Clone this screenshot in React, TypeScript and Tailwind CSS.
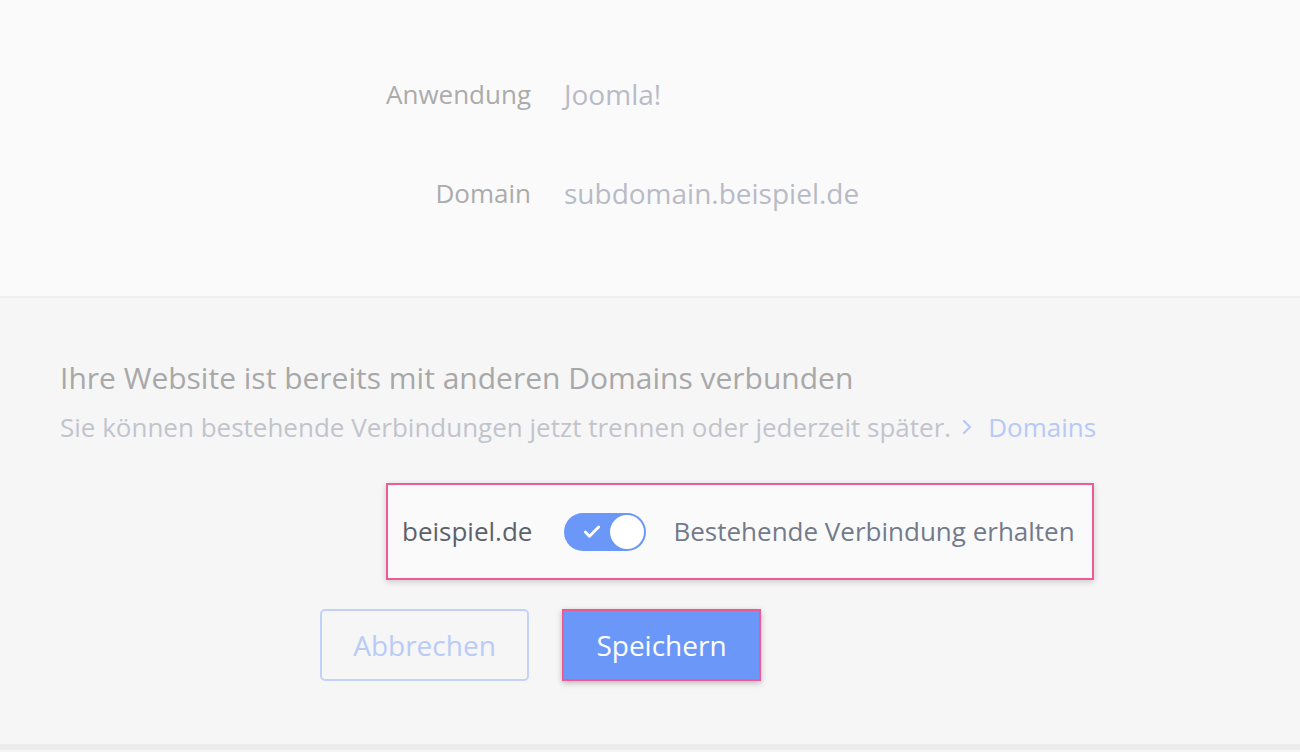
import { Check, ChevronRight } from 'lucide-react';

const INFO = [
  { label: 'Anwendung', value: 'Joomla!' },
  { label: 'Domain', value: 'subdomain.beispiel.de' },
];

export default function App() {
  return (
    <div className="min-h-screen w-full bg-[#f6f6f6] font-['Open_Sans',sans-serif]">
      {/* Summary */}
      <div className="bg-[#fafafa] border-b-2 border-[#efefef] pt-[74px] pb-[82px] flex flex-col gap-[58px]">
        {INFO.map(row => (
          <div key={row.label} className="flex items-center leading-[41px]">
            <span className="w-[531px] text-right text-[26px] text-[#ababab]">{row.label}</span>
            <span className="ml-[33px] text-[28px] text-[#b8bbc6]">{row.value}</span>
          </div>
        ))}
      </div>

      {/* Existing connections */}
      <div className="pt-[58px] pb-[63px] border-b-[6px] border-[#ececec]">
        <div className="px-[60px]">
          <h2 className="text-[30px] leading-[44px] text-[#a8a8a8]">
            Ihre Website ist bereits mit anderen Domains verbunden
          </h2>
          <p className="mt-[9px] flex items-center text-[26px] leading-[36px] text-[#c2c4cc]">
            Sie können bestehende Verbindungen jetzt trennen oder jederzeit später.
            <ChevronRight className="ml-[4px] w-[24px] h-[24px] text-[#b7c9f6]" strokeWidth={2.2} />
            <span className="ml-[9px] text-[#b7c9f6]">Domains</span>
          </p>
        </div>

        <div className="mt-[38px] ml-[386px] w-[708px] h-[97px] flex items-center border-2 border-[#ec5b95] bg-[#fafafa] shadow-[0_2px_6px_rgba(0,0,0,0.18)] px-[14px]">
          <span className="text-[26px] text-[#5d616b]">beispiel.de</span>
          <div className="ml-[32px] w-[82px] h-[38px] rounded-full bg-[#6b97f8] flex items-center justify-between pl-[18px] pr-[2px]">
            <Check className="w-[20px] h-[20px] text-white" strokeWidth={3.5} />
            <div className="w-[34px] h-[34px] rounded-full bg-white" />
          </div>
          <span className="ml-[27px] text-[26px] text-[#737a8b]">Bestehende Verbindung erhalten</span>
        </div>

        <div className="mt-[29px] ml-[320px] flex items-center gap-[33px]">
          <button className="w-[209px] h-[72px] rounded-[5px] border-2 border-[#c2d2f8] text-[28px] text-[#b9cbf6]">
            Abbrechen
          </button>
          <button className="w-[199px] h-[72px] border-2 border-[#ec5b95] bg-[#6b97f8] shadow-[0_2px_6px_rgba(0,0,0,0.25)] text-[28px] text-white">
            Speichern
          </button>
        </div>
      </div>
    </div>
  );
}
